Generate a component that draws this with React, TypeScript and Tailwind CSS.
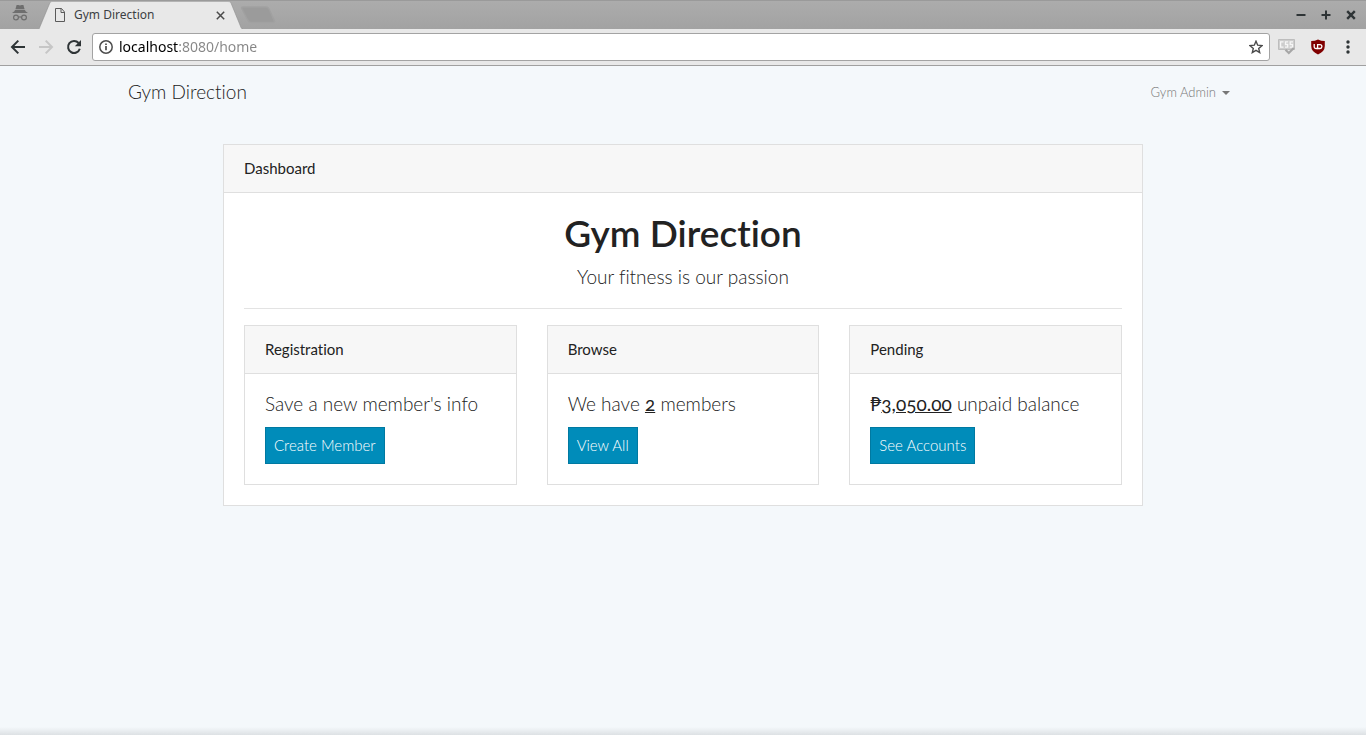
import type { ReactNode } from "react";

function TabStrip() {
  return (
    <div className="flex h-[29px] items-stretch border-t border-[#9a9a9a] bg-linear-to-b from-[#acacac] to-[#a2a2a2]">
      <div className="flex w-[39px] shrink-0 items-center justify-center pb-1">
        <svg width="18" height="18" viewBox="0 0 18 18" className="text-[#6e6e6e]" aria-label="Incognito">
          <path d="M5.6 1h1.800l1.600.6 1.600-.6h1.800l1.200 4.200H4.400zM4 6h10l.6 1.300L17 9H1l2.400-1.700z" fill="currentColor" />
          <g fill="none" stroke="currentColor" strokeWidth="1.2">
            <circle cx="5" cy="13.5" r="2.4" />
            <circle cx="13" cy="13.5" r="2.4" />
            <path d="M7.400 13.200q1.600-.8 3.200 0" />
          </g>
        </svg>
      </div>
      <div className="relative flex w-[204px] shrink-0 items-center pl-[15px] pr-[18px]">
        <svg className="absolute inset-0 h-full w-full" viewBox="0 0 204 28" preserveAspectRatio="none" aria-hidden="true">
          <path d="M0 28L11 1.5Q11.7 0 13 0H189Q191 0 191.800 1.500L202 26.500Q202.700 28 204 28z" fill="#e8e8e8" />
          <path d="M0 28L11 1.5Q11.7.5 13 .5H189Q191 .5 191.800 1.500L202 26.500Q202.700 28 204 28" fill="none" stroke="#8f8f8f" strokeWidth=".6" />
        </svg>
        <svg width="12" height="14" viewBox="0 0 12 14" className="relative shrink-0" fill="none" stroke="#5a5a5a" aria-hidden="true">
          <path d="M1.5.5h6l3 3.5v9.5h-9zM7 .5v4h3.5" />
        </svg>
        <span className="relative ml-2 flex-1 text-xs text-[#3c4043]">Gym Direction</span>
        <button type="button" aria-label="Close tab" className="relative">
          <svg width="9" height="9" viewBox="0 0 9 9" stroke="#4a4a4a" strokeWidth="1.5">
            <path d="M.8.8l7.4 7.4M8.2.8L.8 8.2" />
          </svg>
        </button>
      </div>
      <button type="button" aria-label="New tab" className="-ml-1 flex items-center">
        <svg width="37" height="18" viewBox="0 0 37 18">
          <path d="M4 1h23q2 0 3 2l5 11q1 2.500-1 2.500H12q-2 0-3-2L3 3Q2 1 4 1z" fill="#9b9b9b" stroke="#a1a1a1" strokeWidth="1.500" />
        </svg>
      </button>
      <div className="ml-auto flex items-center gap-[15px] pr-[10px] pb-px text-[#2e3436]">
        <button type="button" aria-label="Minimize">
          <svg width="10" height="10" viewBox="0 0 10 10" stroke="currentColor" strokeWidth="2"><path d="M.5 5h9" /></svg>
        </button>
        <button type="button" aria-label="Maximize">
          <svg width="10" height="10" viewBox="0 0 10 10" stroke="currentColor" strokeWidth="2"><path d="M.5 5h9M5 .5v9" /></svg>
        </button>
        <button type="button" aria-label="Close">
          <svg width="10" height="10" viewBox="0 0 10 10" stroke="currentColor" strokeWidth="2.4"><path d="M1.2 1.2l7.6 7.6M8.8 1.2L1.2 8.8" /></svg>
        </button>
      </div>
    </div>
  );
}

function Toolbar() {
  return (
    <div className="flex h-[37px] items-center border-b border-[#a0a0a0] bg-[#e8e8e8] pl-[10px] pr-[10px]">
      <div className="flex items-center gap-3 text-[#2e3436]">
        <button type="button" aria-label="Back">
          <svg width="16" height="16" viewBox="0 0 16 16" fill="none" stroke="currentColor" strokeWidth="2"><path d="M15 8H2M8.3 1.6L2 8l6.3 6.4" /></svg>
        </button>
        <button type="button" aria-label="Forward" className="text-[#c6c6c6]">
          <svg width="16" height="16" viewBox="0 0 16 16" fill="none" stroke="currentColor" strokeWidth="2"><path d="M1 8h13M7.7 1.6L14 8l-6.3 6.4" /></svg>
        </button>
        <button type="button" aria-label="Reload">
          <svg width="16" height="16" viewBox="0 0 16 16" fill="none"><path d="M12.6 4A6 6 0 1 0 13.800 9.800" stroke="currentColor" strokeWidth="2" /><path d="M15 1v6.200H8.800z" fill="currentColor" /></svg>
        </button>
      </div>
      <div className="ml-[10px] flex h-7 flex-1 items-center rounded-[3px] border border-[#a3a3a3] bg-white px-[6px]">
        <svg width="14" height="14" viewBox="0 0 14 14" fill="none" stroke="#4d4d4d" strokeWidth="1.5" className="shrink-0" aria-hidden="true">
          <circle cx="7" cy="7" r="6.2" /><path d="M7 6v4.3M7 3.4v1.5" strokeWidth="1.7" />
        </svg>
        <input
          aria-label="Address"
          defaultValue="localhost:8080/home"
          className="ml-[6px] min-w-0 flex-1 bg-linear-to-r from-black from-[60px] to-[#868686] to-[60px] bg-clip-text text-sm leading-5 text-transparent caret-black outline-none"
        />
        <button type="button" aria-label="Bookmark">
          <svg width="14" height="14" viewBox="0 0 14 14" fill="none" stroke="#4a4a4a" strokeWidth="1.4"><path d="M7 1.2l1.7 4 4.3.4-3.3 2.8 1 4.2L7 10.4l-3.700 2.200 1-4.200L1 5.600l4.300-.4z" /></svg>
        </button>
      </div>
      <div className="ml-2 flex items-center gap-[15px]">
        <button type="button" aria-label="CSS check">
          <svg width="17" height="16" viewBox="0 0 17 16">
            <path d="M.5.5h16v10h-16z" fill="#cdcdcd" stroke="#bdbdbd" />
            <g fill="none" stroke="#f6f6f6" strokeWidth="1.3"><path d="M5.5 2.800H2.600v5.400h2.900M10.200 2.800H7.500v2.700h2.200v2.700H7M15 2.800h-2.800v2.700h2.300v2.700h-2.800" /></g>
            <path d="M7.500 10.800l3.300 3.200L15.800 9" fill="none" stroke="#a6a6a6" strokeWidth="2.2" />
          </svg>
        </button>
        <button type="button" aria-label="Content blocker">
          <svg width="16" height="16" viewBox="0 0 16 16">
            <path d="M8 .5q3 1.500 6.800 1.500v5q0 5.500-6.800 8.500Q1.200 12.500 1.200 7V2Q5 2 8 .5z" fill="#800000" />
            <g fill="none" stroke="#fff" strokeWidth="1.3"><path d="M4.200 5v3q0 1.500 1.600 1.500H8M7.600 5v4.500" /><path d="M7.600 5.600h2.400q1.900 0 1.900 1.900T10 9.500H7.600" /></g>
          </svg>
        </button>
        <button type="button" aria-label="Menu" className="pr-[5px] pl-1">
          <svg width="6" height="16" viewBox="0 0 6 16" fill="#2e3436"><circle cx="3" cy="3" r="1.7" /><circle cx="3" cy="8" r="1.7" /><circle cx="3" cy="13" r="1.7" /></svg>
        </button>
      </div>
    </div>
  );
}

function Card({ title, children }: { title: string; children: ReactNode }) {
  return (
    <section className="border border-[#dfdfdf] bg-white">
      <h2 className="border-b border-[#dfdfdf] bg-[#f7f7f7] px-5 py-3 text-[15px] leading-[23px] font-normal">{title}</h2>
      <div className="p-5">{children}</div>
    </section>
  );
}

function Action({ children }: { children: string }) {
  return (
    <a href="#" className="inline-flex h-[37px] items-center border border-[#0079a1] bg-[#008cba] px-2 pb-px text-[15px] text-white">
      {children}
    </a>
  );
}

const lead = "mb-[13px] text-[19px] leading-5 oldstyle-nums";

export default function App() {
  return (
    <div className="flex min-h-screen flex-col bg-[#f4f8fb] font-['Lato',sans-serif] font-light text-[#222] [font-variant-ligatures:none]">
      <header className="font-['Noto_Sans',sans-serif] font-normal">
        <TabStrip />
        <Toolbar />
      </header>
      <nav className="mx-auto flex h-[53px] w-full max-w-[1140px] items-center justify-between px-[15px]">
        <a href="#" className="text-[19px] text-[#222]">Gym Direction</a>
        <button type="button" className="flex items-center gap-[6px] px-2 text-[13px] text-[#777]">
          Gym Admin
          <span className="border-x-4 border-t-4 border-x-transparent border-t-[#777]" />
        </button>
      </nav>
      <main className="mx-auto w-full max-w-[950px] flex-1 px-[15px] pt-[25px] pb-8">
        <Card title="Dashboard">
          <div className="text-center">
            <h1 className="mb-[10px] text-[37px] leading-10 font-semibold">Gym Direction</h1>
            <p className="text-[19px] leading-7">Your fitness is our passion</p>
          </div>
          <hr className="mt-[17px] mb-4 border-[#e3e3e3]" />
          <div className="grid grid-cols-3 gap-[30px]">
            <Card title="Registration">
              <p className={lead}>Save a new member's info</p>
              <Action>Create Member</Action>
            </Card>
            <Card title="Browse">
              <p className={lead}>We have <u className="font-normal">2</u> members</p>
              <Action>View All</Action>
            </Card>
            <Card title="Pending">
              <p className={lead}><span className="font-normal">₱<u>3,050.00</u></span> unpaid balance</p>
              <Action>See Accounts</Action>
            </Card>
          </div>
        </Card>
      </main>
      <div className="h-2 bg-linear-to-b from-transparent to-[#dde1e4]" />
    </div>
  );
}
